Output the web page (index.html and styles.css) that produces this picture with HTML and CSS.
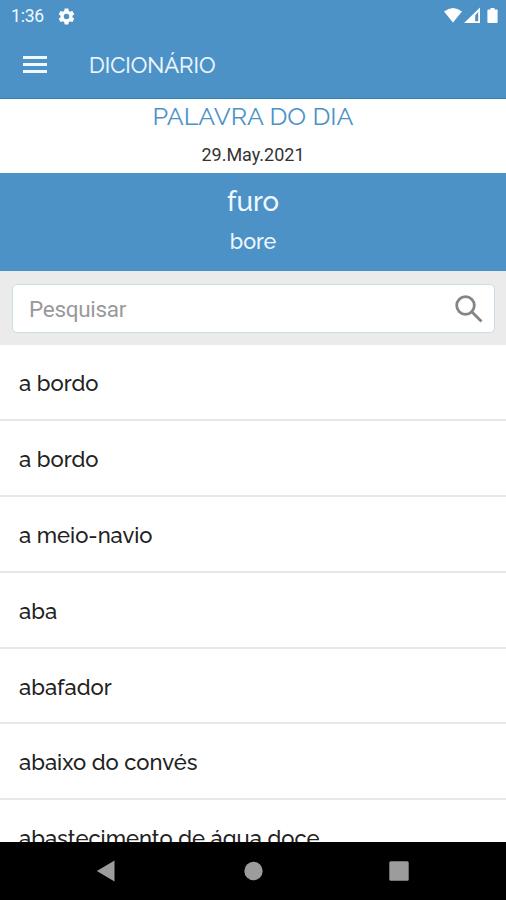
FILE: index.html
```html
<!DOCTYPE html>
<html lang="pt">
<head>
<meta charset="utf-8">
<title>Dicionário</title>
<link rel="stylesheet" href="styles.css">
</head>
<body>
<div class="screen">
  <header class="header">
    <div class="status">
      <span class="time">1:36</span>
      <svg class="gear" viewBox="0 0 24 24"><path d="M19.43 12.98c.04-.32.07-.64.07-.98s-.03-.66-.07-.98l2.11-1.65c.19-.15.24-.42.12-.64l-2-3.46c-.12-.22-.39-.3-.61-.22l-2.49 1c-.52-.4-1.08-.73-1.69-.98l-.38-2.65A.49.49 0 0 0 14 2h-4c-.25 0-.46.18-.49.42l-.38 2.65c-.61.25-1.17.59-1.69.98l-2.49-1c-.23-.09-.49 0-.61.22l-2 3.46c-.13.22-.07.49.12.64l2.11 1.65c-.04.32-.07.65-.07.98s.03.66.07.98l-2.11 1.65c-.19.15-.24.42-.12.64l2 3.46c.12.22.39.3.61.22l2.49-1c.52.4 1.08.73 1.69.98l.38 2.65c.03.24.24.42.49.42h4c.25 0 .46-.18.49-.42l.38-2.65c.61-.25 1.17-.59 1.69-.98l2.49 1c.23.09.49 0 .61-.22l2-3.46c.12-.22.07-.49-.12-.64zM12 15.5a3.5 3.5 0 1 1 0-7 3.5 3.5 0 0 1 0 7z"/></svg>
      <svg class="signals" viewBox="0 0 56 18"><path d="M0 4.500Q9 -2.500 18 4.500L9 15.500z"/><path fill-rule="evenodd" d="M36 .5V16H20zM34.200 5v9.200h-3V8.200z"/><path d="M46.500 1h4v1.500h2.300c.5 0 .8.300.8.800v12c0 .5-.3.800-.8.800h-8.600c-.5 0-.8-.3-.8-.8v-12c0-.5.3-.8.800-.8h2.300z"/></svg>
    </div>
    <div class="toolbar">
      <div class="menu"><i></i><i></i><i></i></div>
      <h1 class="title">DICIONÁRIO</h1>
    </div>
  </header>
  <section class="day">
    <h2 class="day-title">PALAVRA DO DIA</h2>
    <p class="date">29.May.2021</p>
  </section>
  <section class="word">
    <p class="term">furo</p>
    <p class="translation">bore</p>
  </section>
  <div class="search">
    <div class="field">
      <span class="placeholder">Pesquisar</span>
      <svg class="lens" viewBox="0 0 30 30"><circle cx="11.500" cy="11.500" r="8.800"/><path d="M18 18l9.500 9.500"/></svg>
    </div>
  </div>
  <ul class="list">
    <li>a bordo</li>
    <li>a bordo</li>
    <li>a meio-navio</li>
    <li>aba</li>
    <li>abafador</li>
    <li>abaixo do convés</li>
    <li>abastecimento de água doce</li>
  </ul>
  <nav class="nav">
    <svg viewBox="0 0 20 22"><path d="M.8 11L18.500 .5v21z"/></svg>
    <svg viewBox="0 0 20 22"><circle cx="10.500" cy="11" r="9.200"/></svg>
    <svg viewBox="0 0 20 22"><rect x=".3" y="1.300" width="19.400" height="19.400" rx="1.500"/></svg>
  </nav>
</div>
</body>
</html>
```
FILE: styles.css
```css
* { box-sizing: border-box; margin: 0; padding: 0; }
body { background: #fff; font-family: Raleway, Lato, sans-serif; color: #222; }
.screen { width: 506px; height: 900px; display: flex; flex-direction: column; overflow: hidden; }
.header { height: 99px; flex: none; background: #4c92c7; color: #f0f8ff; border-bottom: 1px solid #3383b3; }
.status { height: 32px; display: flex; align-items: center; padding: 0 6.5px 0 11px; }
.time { font: 17.5px/32px Roboto, sans-serif; width: 46px; letter-spacing: -0.2px; }
.gear { width: 19px; height: 19px; fill: #fff; }
.signals { width: 56px; height: 18px; margin-left: auto; fill: #fff; }
.toolbar { height: 65px; display: flex; align-items: center; padding-left: 23px; }
.menu { width: 24px; height: 17px; display: flex; flex-direction: column; justify-content: space-between; margin-right: 42px; }
.menu i { height: 3px; background: #f0f8ff; }
.title { font-size: 22px; line-height: 64px; font-weight: 400; -webkit-text-stroke: 0.2px; }
.day { height: 74px; flex: none; text-align: center; }
.day-title { font-size: 25px; line-height: 34px; font-weight: 400; color: #4c92c7; }
.date { font: 18px/44px Roboto, sans-serif; color: #333; }
.word { height: 98px; flex: none; background: #4c92c7; color: #f0f8ff; text-align: center; }
.term { font-size: 27.5px; line-height: 56px; font-weight: 500; }
.translation { font-size: 21.5px; line-height: 26px; font-weight: 500; }
.search { height: 74px; flex: none; background: #ecebec; padding: 13px 11px 12px 12px; }
.field { height: 49px; background: #fff; border: 1px solid #ccdce5; border-radius: 5px; display: flex; align-items: center; justify-content: space-between; padding: 0 10px 0 16px; }
.placeholder { font: 22.5px/50px Roboto, sans-serif; letter-spacing: -0.3px; color: #999; }
.lens { width: 30px; height: 30px; fill: none; stroke: #858585; stroke-width: 2.8; }
.list { flex: 1; min-height: 0; overflow: hidden; list-style: none; }
.list li { height: 75.900px; border-bottom: 2px solid #e8e8e8; padding-left: 19px; font-size: 22px; line-height: 77px; font-weight: 500; white-space: nowrap; }
.nav { height: 58px; flex: none; background: #000; display: flex; justify-content: space-between; align-items: center; padding: 0 97px 0 96px; }
.nav svg { width: 20px; height: 22px; fill: #9c9c9c; }
```
